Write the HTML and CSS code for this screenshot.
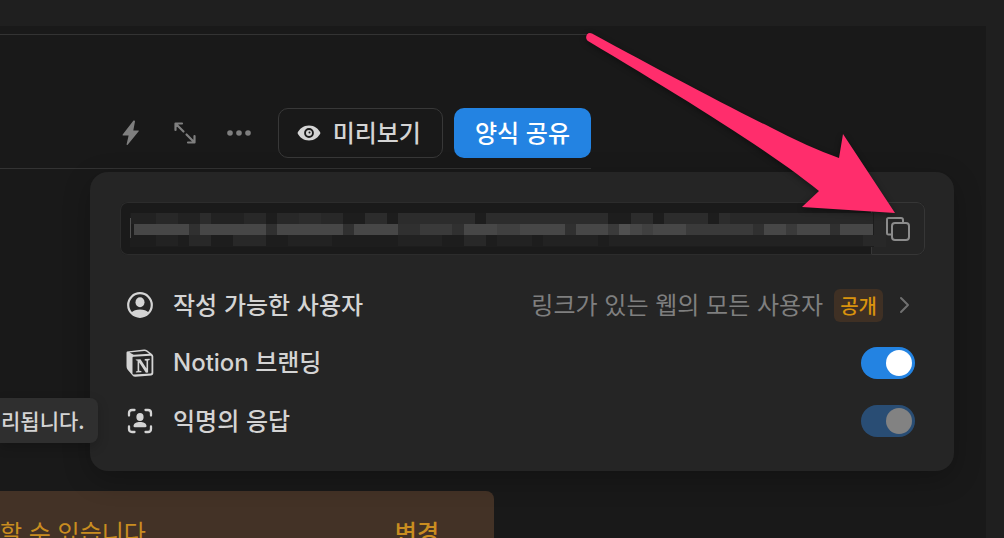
FILE: index.html
```html
<!DOCTYPE html>
<html lang="ko">
<head>
<meta charset="utf-8">
<meta name="viewport" content="width=device-width, initial-scale=1">
<title>양식 공유</title>
<link rel="stylesheet" href="styles.css">
</head>
<body>
<main class="page">
  <header class="toolbar">
    <button class="icon-button" type="button" aria-label="자동화">
      <svg width="28" height="28" viewBox="0 0 28 28"><path d="M16.5 1.500 5.700 15.500q-.6.900.4.900h5.500L9.600 25.300q0 1.400 1.100.4L21.700 12.300q.6-.9-.4-.9h-5l1.700-8.900q0-1.500-1.500-1z" fill="#7f7f7f"/></svg>
    </button>
    <button class="icon-button" type="button" aria-label="전체 화면">
      <svg width="28" height="28" viewBox="0 0 28 28" fill="none" stroke="#7f7f7f" stroke-width="2.200" stroke-linecap="round" stroke-linejoin="round"><path d="M4.500 11v-6.500H11M5 5l7.500 7.500M23.500 17v6.500H17M23 23l-7.500-7.500"/></svg>
    </button>
    <button class="icon-button" type="button" aria-label="더 보기">
      <svg width="28" height="28" viewBox="0 0 28 28" fill="#7f7f7f"><circle cx="5" cy="14" r="2.800"/><circle cx="14" cy="14" r="2.800"/><circle cx="23" cy="14" r="2.800"/></svg>
    </button>
    <button class="button preview" type="button">
      <svg width="24" height="24" viewBox="0 0 24 24"><path fill="#d4d4d4" fill-rule="evenodd" d="M12 4.500C6.500 4.500 2.200 8 .5 12c1.700 4 6 7.500 11.500 7.500S21.800 16 23.500 12C21.800 8 17.500 4.500 12 4.500zm0 2.600a4.900 4.900 0 1 1 0 9.800 4.900 4.900 0 0 1 0-9.800z"/><circle cx="12" cy="12" r="3" fill="#d4d4d4"/><circle cx="12.500" cy="11.500" r="1" fill="#191919"/></svg>
      <span class="button-text">미리보기</span>
    </button>
    <button class="button share" type="button"><span class="button-text">양식 공유</span></button>
  </header>

  <section class="callout">
    <span>할 수 있습니다</span>
    <button class="callout-action" type="button">변경</button>
  </section>

  <section class="popover" aria-label="양식 공유">
    <div class="link-field">
      <input class="link-input" type="text" readonly aria-label="양식 링크">
      <button class="copy" type="button" aria-label="링크 복사">
        <svg width="28" height="28" viewBox="0 0 28 28" fill="none" stroke="#8c8c8c" stroke-width="2"><path d="M8 19.500H4.500q-1.500 0-1.500-1.500V4.500Q3 3 4.500 3H17q2 0 2 2v3"/><rect x="8" y="8" width="17" height="17" rx="3"/></svg>
      </button>
      <svg class="mosaic" viewBox="0 0 755 34" preserveAspectRatio="none" shape-rendering="crispEdges" aria-hidden="true">
        <path fill="#1d1d1d" d="M0 0h755v34H0z"/>
        <path fill="#222" d="M1 0h69v11H1zM81 0h22v11H81zM103 0h22v11h-22zM26 22h22v11H26zM158 22h44v11h-44zM268 22h44v11h-44zM367 22h34v11h-34zM412 22h55v11h-55zM478 22h254v11H478z"/>
        <path fill="#282828" d="M26 0h22v11H26zM114 0h22v11h-22zM147 0h66v11h-66zM59 22h22v11H59zM103 22h33v11h-33zM334 22h22v11h-22zM599 0h143v11H599zM732 22h11v11h-11zM743 0h12v34h-12z"/>
        <path fill="#2c2c2c" d="M70 0h11v11H70zM169 0h22v11h-22zM235 0h22v11h-22zM268 0h77v11h-77zM356 0h121v11H356zM500 0h22v11h-22zM533 0h44v11h-44zM588 0h11v11h-11z"/>
        <path fill="#303030" d="M4 11h738v11H4z"/>
        <path fill="#3a3a3a" d="M290 11h32v11h-32zM477 11h11v11h-11zM555 11h67v11h-67zM655 11h11v11h-11z"/>
        <path fill="#474747" d="M4 11h55v11H4zM70 11h66v11H70zM147 11h66v11h-66zM224 11h44v11h-44zM334 11h33v11h-33zM389 11h45v11h-45zM445 11h32v11h-32zM499 11h56v11h-56zM633 11h22v11h-22zM666 11h33v11h-33zM709 11h33v11h-33z"/>
        <path fill="#404040" d="M367 11h22v11h-22zM511 11h11v11h-11z"/>
        <path fill="#505050" d="M488 11h11v11h-11zM0 5h1v20H0z"/>
      </svg>
    </div>

    <button class="row audience" type="button">
      <svg width="28" height="28" viewBox="0 0 28 28"><circle cx="14" cy="14" r="11.800" fill="none" stroke="#d4d4d4" stroke-width="2.200"/><ellipse cx="14" cy="11.200" rx="4.500" ry="5" fill="#d4d4d4"/><path d="M5.500 21.500C8.500 17.500 19.500 17.500 22.500 21.500 18 27.500 10 27.500 5.500 21.500z" fill="#d4d4d4"/></svg>
      <span class="label">작성 가능한 사용자</span>
      <span class="value">링크가 있는 웹의 모든 사용자</span>
      <span class="badge">공개</span>
      <svg class="chevron" width="12" height="18" viewBox="0 0 12 18" fill="none" stroke="#707070" stroke-width="2" stroke-linecap="round" stroke-linejoin="round"><path d="m2 2 7 7-7 7"/></svg>
    </button>

    <div class="row">
      <svg width="28" height="28" viewBox="0 0 28 28"><path d="M1 2.500 18 .5q1.800-.2 3 .7l5 3.800q1.300 1 1.300 2.500v16.800q0 2-2 2.200L9.500 27.700q-2 .1-3-1.200L1.500 20.500Q.5 19 .5 17V3.500z" fill="#d4d4d4"/><path d="M3.500 3.400 18.500 2q1 0 1.700.5l3 2.200L7.700 5.800z" fill="#252525"/><path d="M6.500 8.800q0-1 1-1.100L24.500 6.700q1 0 1 1v15.700q0 1-1 1.100L7.600 25.600q-1.100 0-1.100-1z" fill="#252525"/><path d="M9.500 10.500l5-.3 6 9.300v-7.700l-1.800-.4V10l5-.3v1.200l-1.600.6v12l-2.200.2-6.700-10.300v8.300l2.200.4v1.100l-5.500.4V22.500l1.700-.6V11.800l-1.100-.2z" fill="#d4d4d4"/></svg>
      <label class="label latin" for="branding">Notion 브랜딩</label>
      <input class="toggle" id="branding" type="checkbox" checked>
    </div>

    <div class="row">
      <svg width="28" height="28" viewBox="0 0 28 28"><g fill="none" stroke="#d4d4d4" stroke-width="2.300" stroke-linecap="round"><path d="M3 8.500V6q0-3 3-3h2.500M19.500 3H22q3 0 3 3v2.500M25 19.500V22q0 3-3 3h-2.500M8.500 25H6q-3 0-3-3v-2.500"/></g><ellipse cx="14" cy="10" rx="3.600" ry="3.900" fill="#d4d4d4"/><path d="M7.500 19c0-5.500 13-5.500 13 0q0 1.300-1.300 1.300H8.800Q7.500 20.300 7.500 19z" fill="#d4d4d4"/></svg>
      <label class="label" for="anonymous">익명의 응답</label>
      <input class="toggle" id="anonymous" type="checkbox" checked disabled>
    </div>

    <svg class="arrow" width="320" height="190" viewBox="0 0 320 190" aria-hidden="true"><path fill="#ff2d6c" d="M12 3.500C70 35 145 75 190 97q38 20 69 31l4-24 52 79-93-6 17-16C190 121 100 66 8 11 4 8 7 1 12 3.500z"/></svg>
  </section>

  <div class="tooltip" role="tooltip">리됩니다.</div>
</main>
</body>
</html>
```
FILE: styles.css
```css
* {
  box-sizing: border-box;
}

body {
  margin: 0;
  min-height: 100vh;
  display: flex;
  flex-direction: column;
  background: #1f1f1f;
  color: #d4d4d4;
  font: 400 24px/36px "Noto Sans CJK KR", "Noto Sans", sans-serif;
  overflow: hidden;
}

button {
  margin: 0;
  padding: 0;
  border: 0;
  background: none;
  color: inherit;
  font: inherit;
}

svg {
  display: block;
  flex: none;
}

.page {
  position: relative;
  flex: 1;
  margin: 26px 18px 0 0;
  padding-top: 8px;
  background: #191919;
}

.toolbar {
  display: flex;
  align-items: center;
  justify-content: flex-end;
  max-width: 591px;
  padding: 73px 0 10px;
  border-top: 1px solid #333;
  border-bottom: 1px solid #333;
}

.icon-button {
  display: flex;
  justify-content: center;
  width: 54px;
}

.button {
  display: flex;
  align-items: center;
  gap: 12px;
  height: 50px;
  padding: 0 21px;
  border-radius: 10px;
  font-weight: 500;
}

.button-text {
  padding-bottom: 2px;
}

.preview {
  margin: 0 11px 0 12px;
  padding: 0 21px 0 18px;
  border: 1px solid #383838;
}

.share {
  background: #2383e2;
  color: #fff;
}

.callout {
  display: flex;
  justify-content: space-between;
  max-width: 494px;
  margin-top: 322px;
  padding: 23px 55px 23px 0;
  border-radius: 0 8px 8px 0;
  background: #433226;
  color: #c98d20;
}

.callout-action {
  font-weight: 500;
}

.popover {
  position: absolute;
  top: 146px;
  left: 90px;
  right: 32px;
  padding: 30px 29px 21px 30px;
  border-radius: 18px;
  background: #252525;
  box-shadow: 0 8px 28px rgba(0, 0, 0, 0.24);
}

.link-field {
  position: relative;
  display: flex;
  height: 53px;
  margin-bottom: 21px;
  border-radius: 8px;
  background: #1a1a1a;
}

.link-input {
  flex: 1;
  min-width: 0;
  padding: 0 10px;
  border: 1px solid #2c2c2c;
  border-right: 0;
  border-radius: 8px 0 0 8px;
  outline: 0;
  background: transparent;
  color: inherit;
  font: inherit;
}

.copy {
  display: flex;
  align-items: center;
  justify-content: center;
  width: 54px;
  border: 1px solid #363636;
  border-radius: 0 8px 8px 0;
  background: #252525;
}

.copy svg {
  position: relative;
  z-index: 1;
}

.mosaic {
  position: absolute;
  top: 11px;
  left: 10px;
  width: calc(100% - 49px);
  height: 34px;
}

.row {
  display: flex;
  align-items: center;
  width: 100%;
  height: 58px;
  padding: 0 10px 0 6px;
  text-align: left;
}

.label {
  flex: 1;
  margin-left: 19px;
  padding-bottom: 2px;
  font-weight: 500;
}

.latin {
  padding-bottom: 0;
  font-family: Inter, "Noto Sans CJK KR", sans-serif;
}

.value {
  padding-bottom: 2px;
  color: #7f7f7f;
}

.badge {
  margin: 0 16px 0 11px;
  padding: 0 6px;
  border-radius: 6px;
  background: #3f3024;
  color: #d9930d;
  font-size: 20px;
  font-weight: 500;
  line-height: 33px;
}

.chevron {
  margin-right: 4px;
}

.toggle {
  appearance: none;
  display: flex;
  align-items: center;
  justify-content: flex-end;
  width: 54px;
  height: 32px;
  margin: 0;
  padding: 3px;
  border-radius: 16px;
  background: #2383e2;
}

.toggle::before {
  content: "";
  width: 26px;
  height: 26px;
  border-radius: 50%;
  background: #fff;
}

.toggle:disabled {
  background: #294d74;
}

.toggle:disabled::before {
  background: #828282;
}

.arrow {
  position: absolute;
  top: -142px;
  right: 54px;
  z-index: 2;
  filter: drop-shadow(0 2px 3px rgba(0, 0, 0, 0.4));
  pointer-events: none;
}

.tooltip {
  position: absolute;
  top: 372px;
  left: 0;
  padding: 0 13px 0 1px;
  border-radius: 0 8px 8px 0;
  background: #2f2f2f;
  box-shadow: 0 4px 12px rgba(0, 0, 0, 0.2);
  font-size: 21px;
  font-weight: 500;
  line-height: 45px;
}
```
